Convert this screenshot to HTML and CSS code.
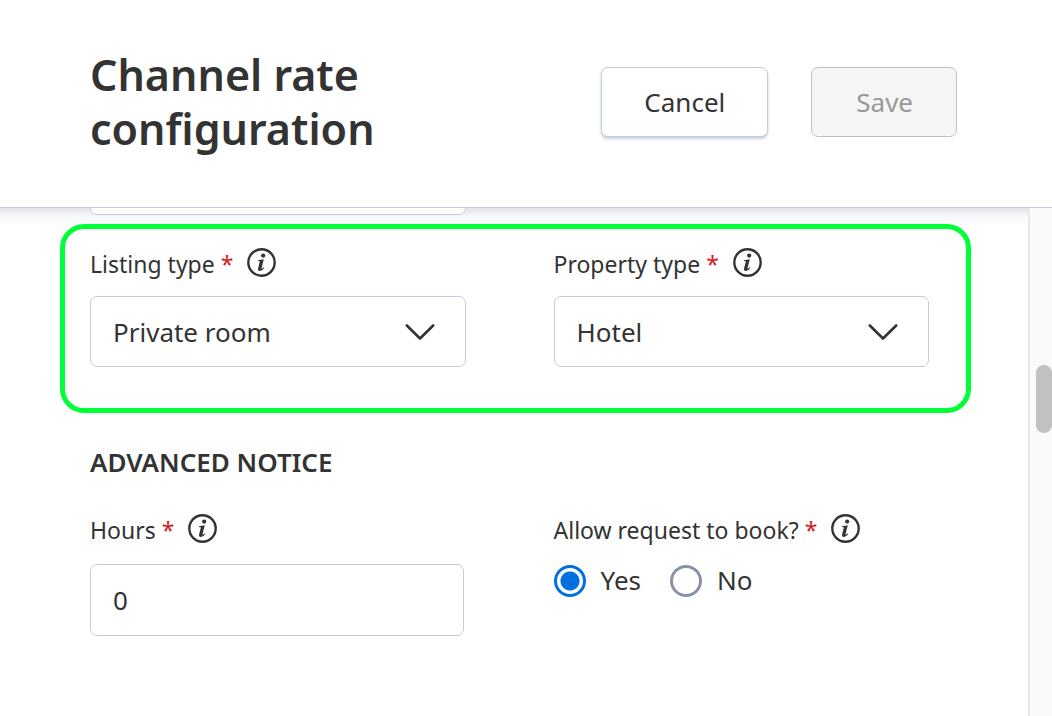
FILE: index.html
```html
<!DOCTYPE html>
<html lang="en">
<head>
<meta charset="utf-8">
<title>Channel rate configuration</title>
<link rel="stylesheet" href="styles.css">
</head>
<body>
<svg class="sprite" aria-hidden="true">
  <symbol id="info" viewBox="0 0 29 29">
    <circle cx="14.5" cy="14.5" r="13.2" fill="none" stroke="currentColor" stroke-width="2.4"/>
    <circle cx="16.2" cy="7.6" r="2.1" fill="currentColor"/>
    <path d="M11 12.2L16.8 11.2L14.6 19.7Q14.3 21 15.2 20.6Q15.9 20.2 16.7 19.2L17.4 19.7Q15.3 23 12.9 23Q10.5 23 11.1 20.3L12.7 14.2Q13 12.9 12 13L10.9 13.2Z" fill="currentColor"/>
  </symbol>
  <symbol id="chevron" viewBox="0 0 30 18">
    <path d="M1.8 2.5L15 15.5L28.2 2.5" fill="none" stroke="currentColor" stroke-width="2.6" stroke-linecap="round" stroke-linejoin="round"/>
  </symbol>
</svg>
<div class="page">
  <header class="header">
    <h1 class="title">Channel rate configuration</h1>
    <div class="actions">
      <button class="button" type="button">Cancel</button>
      <button class="button button-disabled" type="button" disabled>Save</button>
    </div>
  </header>
  <div class="body">
    <main class="scroller">
      <form class="form">
        <div class="row row-previous">
          <input class="control" type="text" aria-label="Previous field">
        </div>
        <section class="row row-highlight">
          <div class="field">
            <div class="label-row">
              <label for="listing">Listing type <span class="required">*</span></label>
              <svg class="info"><use href="#info"/></svg>
            </div>
            <div class="select-wrap">
              <select class="control" id="listing"><option>Private room</option></select>
              <svg class="chevron"><use href="#chevron"/></svg>
            </div>
          </div>
          <div class="field">
            <div class="label-row">
              <label for="property">Property type <span class="required">*</span></label>
              <svg class="info"><use href="#info"/></svg>
            </div>
            <div class="select-wrap">
              <select class="control" id="property"><option>Hotel</option></select>
              <svg class="chevron"><use href="#chevron"/></svg>
            </div>
          </div>
        </section>
        <h2 class="section-title">ADVANCED NOTICE</h2>
        <section class="row">
          <div class="field field-hours">
            <div class="label-row">
              <label for="hours">Hours <span class="required">*</span></label>
              <svg class="info"><use href="#info"/></svg>
            </div>
            <input class="control" id="hours" type="text" value="0">
          </div>
          <div class="field" role="radiogroup" aria-labelledby="request-label">
            <div class="label-row">
              <span id="request-label">Allow request to book? <span class="required">*</span></span>
              <svg class="info"><use href="#info"/></svg>
            </div>
            <div class="radios">
              <label class="option"><input class="radio" type="radio" name="request" checked>Yes</label>
              <label class="option"><input class="radio" type="radio" name="request">No</label>
            </div>
          </div>
        </section>
      </form>
    </main>
    <div class="track"><div class="thumb"></div></div>
  </div>
</div>
</body>
</html>
```
FILE: styles.css
```css
* { box-sizing: border-box; }
body {
  margin: 0;
  color: #333;
  background: #fff;
  font-family: "Noto Sans", sans-serif;
  font-size: 26px;
}
.sprite { position: absolute; width: 0; height: 0; }
.page { display: flex; flex-direction: column; height: 100vh; overflow: hidden; }
.header {
  display: flex;
  justify-content: space-between;
  align-items: flex-start;
  padding: 48px 95px 51px 90px;
  border-bottom: 1px solid #c3ccdc;
}
.title { max-width: 340px; margin: 0; font-size: 43px; line-height: 54px; font-weight: 600; }
.actions { display: flex; gap: 43px; padding-top: 19px; }
.button {
  height: 70px;
  padding: 0 42px;
  border: 1px solid #c3ccdc;
  border-radius: 7px;
  background: #fff;
  color: #333;
  font: inherit;
  box-shadow: 0 2px 3px #c3d0dc;
}
.button-disabled { padding: 0 43px 0 44px; border-color: #bfbfbf; background: #f5f5f5; color: #999; box-shadow: none; }
.body { display: flex; flex: 1; min-height: 0; }
.scroller {
  flex: 1;
  overflow: hidden;
  background: linear-gradient(#dfe3ea, #f5f7f9 8px, #fff 18px);
}
.form { margin-top: -64px; padding: 0 57px 0 60px; }
.row { display: grid; grid-template-columns: 1fr 1fr; gap: 88px; padding: 0 42px 0 30px; }
.row-previous { margin-bottom: 9px; }
.row-highlight {
  padding: 19px 37px 41px 25px;
  border: 5px solid #00ff37;
  border-radius: 24px;
  background: #fff;
}
.field { min-width: 0; }
.label-row { display: flex; gap: 14px; margin-bottom: 15px; font-size: 23px; line-height: 33px; }
.required { color: #d91c1c; }
.info { width: 29px; height: 29px; }
.select-wrap { position: relative; }
.control {
  display: block;
  width: 100%;
  height: 71px;
  padding: 0 22px;
  border: 1px solid #c3ccdc;
  border-radius: 7px;
  background: #fff;
  color: inherit;
  font: inherit;
  appearance: none;
}
.chevron { position: absolute; top: 27px; right: 31px; width: 30px; height: 18px; pointer-events: none; }
.section-title { margin: 30px 30px 33px; font-size: 26px; line-height: 38px; font-weight: 600; }
.field-hours { padding-right: 2px; }
.field-hours .label-row { margin-bottom: 17px; }
.field-hours .control { height: 72px; }
.radios { display: flex; gap: 29px; }
.option { display: flex; align-items: center; gap: 15px; line-height: 37px; }
.radio {
  width: 32px;
  height: 32px;
  margin: 0;
  border: 3px solid #8792a8;
  border-radius: 50%;
  background: #fff;
  appearance: none;
}
.radio:checked { border-color: #006fe0; background: radial-gradient(circle, #006fe0 9px, #fff 10px); }
.track { position: relative; width: 24px; border-left: 2px solid #e8e8e8; background: #fafafa; }
.thumb { position: absolute; top: 31%; right: 0; width: 16px; height: 68px; border-radius: 8px; background: #c1c1c1; }
```
